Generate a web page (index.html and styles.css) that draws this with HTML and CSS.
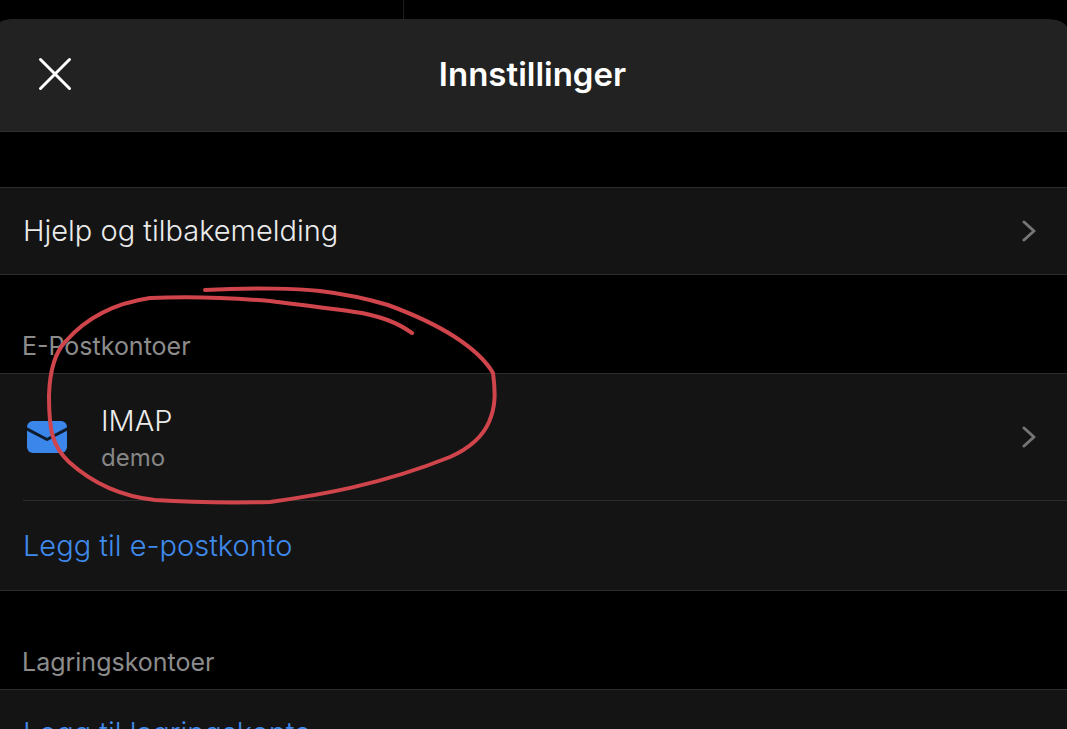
FILE: index.html
```html
<!DOCTYPE html>
<html lang="no">
<head>
<meta charset="utf-8">
<meta name="viewport" content="width=device-width, initial-scale=1">
<title>Innstillinger</title>
<link rel="stylesheet" href="styles.css">
</head>
<body>
<div class="backdrop"><div class="pane"></div></div>
<div class="sheet">
  <header class="header">
    <button class="close" type="button" aria-label="Lukk">
      <svg width="34" height="34" viewBox="0 0 34 34"><path d="M2.5 2.5L31.5 31.5M31.5 2.5L2.5 31.5"/></svg>
    </button>
    <h1>Innstillinger</h1>
  </header>
  <main>
    <ul class="list first">
      <li>
        <a class="row" href="#">
          <span class="label">Hjelp og tilbakemelding</span>
          <svg class="chevron" width="14" height="22" viewBox="0 0 14 22"><path d="M2 2L12 11L2 20"/></svg>
        </a>
      </li>
    </ul>

    <h2>E-Postkontoer</h2>
    <ul class="list">
      <li>
        <a class="row account" href="#">
          <svg class="mail" width="40" height="32" viewBox="0 0 40 32">
            <rect width="40" height="32" rx="6"/>
            <path d="M-1 7.5L20 18.5L41 7.5"/>
          </svg>
          <span class="label">IMAP<small>demo</small></span>
          <svg class="chevron" width="14" height="22" viewBox="0 0 14 22"><path d="M2 2L12 11L2 20"/></svg>
        </a>
      </li>
      <li><a class="row add" href="#">Legg til e-postkonto</a></li>
    </ul>

    <h2>Lagringskontoer</h2>
    <ul class="list">
      <li><a class="row add" href="#">Legg til lagringskonto</a></li>
    </ul>
  </main>
</div>
<!-- hand drawn ring round the account -->
<svg class="ring" width="520" height="520" viewBox="0 0 520 520">
  <path d="M205 290C255 287 300 289 320 291C345 294 368 299 388 305C415 315 438 326 455 337C475 350 486 361 493 373C496 395 495 408 489 422C482 438 468 449 450 457C380 485 320 495 270 502C225 503 185 502 155 500C118 496 90 481 69 462C52 446 49 430 49 395C50 366 57 350 66 341C88 316 116 303 150 298C190 296 235 298 270 301C310 306 345 310 362 313C380 317 395 321 412 333"/>
</svg>
</body>
</html>
```

FILE: styles.css
```css
* {
  box-sizing: border-box;
  margin: 0;
  padding: 0;
}
body {
  height: 100vh;
  overflow: hidden;
  background: #000;
  color: #ebebeb;
  font-family: Inter, "Liberation Sans", sans-serif;
  font-size: 29px;
  font-weight: 300;
  line-height: 36px;
}
ul {
  list-style: none;
}
a {
  color: inherit;
  text-decoration: none;
}
svg {
  flex: none;
  display: block;
  fill: none;
  stroke-linecap: round;
  stroke-linejoin: round;
}
.backdrop {
  height: 19px;
}
.pane {
  width: 404px;
  height: 100%;
  border-right: 1px solid #1c1c1c;
}
.header {
  display: grid;
  grid-template-columns: 60px 1fr 60px;
  align-items: center;
  height: 113px;
  padding: 0 26px 2px 24px;
  background: #222;
  border-bottom: 1px solid #303030;
  border-radius: 14px 20px 0 0 / 4px 9px 0 0;
}
.close {
  width: 60px;
  height: 60px;
  padding: 0 14px;
  background: none;
  border: 0;
}
.close svg {
  stroke: #fff;
  stroke-width: 3;
}
h1 {
  color: #fff;
  font-size: 33px;
  font-weight: 600;
  line-height: 40px;
  text-align: center;
}
h2 {
  height: 98px;
  padding: 54px 22px 0;
  color: #8c8c8c;
  font-size: 25px;
  font-weight: 400;
  line-height: 34px;
}
.list {
  background: #141414;
  border-top: 1px solid #2c2c2c;
  border-bottom: 1px solid #2c2c2c;
}
.first {
  margin-top: 55px;
}
.list li + li {
  margin-left: 23px;
  border-top: 1px solid #2c2c2c;
}
.list li + li .row {
  min-height: 89px;
  padding-left: 0;
}
.row {
  display: flex;
  align-items: center;
  min-height: 86px;
  padding: 0 31px 0 23px;
}
.label {
  flex: 1;
}
.account {
  min-height: 126px;
  padding-left: 27px;
}
.account .label {
  margin-left: 34px;
  padding-top: 6px;
}
.label small {
  display: block;
  color: #868686;
  font-size: 24px;
  font-weight: 400;
  line-height: 38px;
}
.mail rect {
  fill: #3b86ea;
}
.mail path {
  stroke: #0f1c2e;
  stroke-width: 3;
}
.chevron {
  stroke: #757575;
  stroke-width: 3;
}
.add {
  color: #3f8aec;
}
.ring {
  position: absolute;
  top: 0;
  left: 0;
  pointer-events: none;
  stroke: #cf454b;
  stroke-width: 4;
}
```
